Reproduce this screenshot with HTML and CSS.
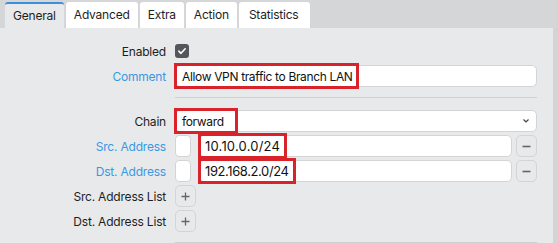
FILE: index.html
```html
<!DOCTYPE html>
<html lang="en">
<head>
    <meta charset="UTF-8">
    <title>Firewall Rule</title>
    <link rel="stylesheet" href="styles.css">
</head>
<body>
    <div class="tabs">
        <div class="tab active">General</div>
        <div class="tab">Advanced</div>
        <div class="tab">Extra</div>
        <div class="tab">Action</div>
        <div class="tab">Statistics</div>
    </div>

<div class="panel">
    <div class="form">
        <div class="row">
            <label>Enabled</label>
            <div class="ctl">
                <span class="check">
                    <svg width="10" height="10" viewBox="0 0 10 10"><path d="M1.8 5.2 L4 7.3 L8.2 2.8" fill="none" stroke="#fff" stroke-width="1.6" stroke-linecap="round" stroke-linejoin="round"/></svg>
                </span>
            </div>
        </div>
        <div class="row">
            <label class="set">Comment</label>
            <div class="ctl">
                <div class="field"><span class="hl hl-comment">Allow VPN traffic to Branch LAN</span></div>
            </div>
        </div>

        <div class="sep"></div>

        <div class="row">
            <label>Chain</label>
            <div class="ctl">
                <div class="field select">
                    <span class="hl hl-chain">forward</span>
                    <svg class="chev" width="8" height="6" viewBox="0 0 8 6"><path d="M1.5 1.5 L4 4 L6.5 1.5" fill="none" stroke="#444" stroke-width="1.2"/></svg>
                </div>
            </div>
        </div>
        <div class="row">
            <label class="set">Src. Address</label>
            <div class="ctl">
                <span class="neg"></span>
                <div class="field"><span class="hl hl-addr">10.10.0.0/24</span></div>
                <span class="btn"><svg width="9" height="9" viewBox="0 0 9 9"><path d="M0.5 4.5 H8.5" stroke="#666" stroke-width="1.6"/></svg></span>
            </div>
        </div>
        <div class="row">
            <label class="set">Dst. Address</label>
            <div class="ctl">
                <span class="neg"></span>
                <div class="field"><span class="hl hl-addr hl-dst">192.168.2.0/24</span></div>
                <span class="btn"><svg width="9" height="9" viewBox="0 0 9 9"><path d="M0.5 4.5 H8.5" stroke="#666" stroke-width="1.6"/></svg></span>
            </div>
        </div>
        <div class="row">
            <label>Src. Address List</label>
            <div class="ctl"><span class="btn"><svg width="9" height="9" viewBox="0 0 9 9"><path d="M0.5 4.5 H8.5 M4.5 0.5 V8.5" stroke="#666" stroke-width="1.3"/></svg></span></div>
        </div>
        <div class="row">
            <label>Dst. Address List</label>
            <div class="ctl"><span class="btn"><svg width="9" height="9" viewBox="0 0 9 9"><path d="M0.5 4.5 H8.5 M4.5 0.5 V8.5" stroke="#666" stroke-width="1.3"/></svg></span></div>
        </div>

        <div class="sep sep-last"></div>
    </div>
    <div class="scroll"></div>
</div>

</body>
</html>
```

FILE: styles.css
```css
body {
    font-family: 'Inter', 'Noto Sans', sans-serif;
    font-size: 12px;
    letter-spacing: -0.2px;
    color: #1e1e1e;
    margin: 0;
    padding: 0;
    background: #e8e9ea;
}
.tabs {
    display: flex;
    gap: 2px;
    height: 26px;
    padding: 2px 0 0 5px;
    background: #d4d6d8;
}
.tab {
    background: #fff;
    padding: 0 8px;
    line-height: 26px;
    border-radius: 3px 3px 0 0;
    color: #1e1e1e;
}
.tab:last-child {
    padding: 0 11px 0 10px;
}
.tab.active {
    background: #e8e9ea;
    border-top: 2px solid #3b8fdb;
    line-height: 24px;
}
.panel {
    display: flex;
    height: 215px;
}
.form {
    flex: 1;
    padding: 12px 16px 0 0;
    display: flex;
    flex-direction: column;
    gap: 3px;
}
.scroll {
    width: 4px;
    background: #d2d4d6;
}
.row {
    display: flex;
    align-items: center;
    height: 22px;
}
label {
    width: 166px;
    margin-right: 9px;
    text-align: right;
    flex-shrink: 0;
}
label.set {
    color: #3a98e2;
}
.ctl {
    flex: 1;
    display: flex;
    align-items: center;
    gap: 4px;
    height: 22px;
}
.check {
    width: 14px;
    height: 14px;
    border-radius: 3px;
    background: #53575b;
    display: flex;
    align-items: center;
    justify-content: center;
}
.field {
    flex: 1;
    height: 20px;
    background: #fff;
    border: 1px solid #d2d4d6;
    border-radius: 5px;
    display: flex;
    align-items: stretch;
    letter-spacing: -0.35px;
}
.select {
    justify-content: space-between;
}
.chev {
    align-self: center;
    margin-right: 6px;
}
.hl {
    display: flex;
    align-items: center;
    margin: -3px 0 -3px -2px;
    border: 3px solid #d8232b;
    color: #111;
}
.hl-comment {
    padding: 0 3px 0 5px;
}
.hl-chain {
    padding: 0 11px 0 5px;
}
.hl-addr {
    padding: 0 4px 0 4px;
    font-size: 13px;
    letter-spacing: 0.2px;
}
.hl-dst {
    letter-spacing: -0.4px;
}
.neg {
    width: 14px;
    height: 20px;
    background: #fff;
    border: 1px solid #d2d4d6;
    border-radius: 4px;
    margin-right: 4px;
}
.btn {
    width: 19px;
    height: 20px;
    border: 1px solid #d2d4d6;
    border-radius: 5px;
    display: flex;
    align-items: center;
    justify-content: center;
}
.sep {
    height: 1px;
    background: #cfd1d3;
    margin: 7px 0 9px 175px;
    flex-shrink: 0;
}
.sep-last {
    margin-top: 7px;
}
```
